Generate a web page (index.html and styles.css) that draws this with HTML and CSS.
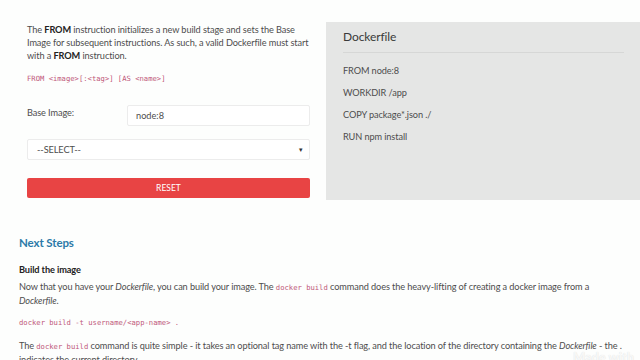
FILE: index.html
```html
<!doctype html>

<html>
  <head>
    <meta charset="UTF-8" />
    <title>Dockerfile</title>
    <link rel="stylesheet" href="styles.css">
  </head>

  <body>
    <div class="builder">
      <form class="form">
        <p class="intro">
          The <b>FROM</b> instruction initializes a new build stage and sets the Base
          Image for subsequent instructions. As such, a valid Dockerfile must start
          with a <b>FROM</b> instruction.
        </p>
        <code class="syntax">FROM &lt;image&gt;[:&lt;tag&gt;] [AS &lt;name&gt;]</code>

        <div class="field">
          <label for="base">Base Image:</label>
          <input type="text" id="base" value="node:8" />
        </div>

        <div class="select">
          <span>--SELECT--</span>
          <span class="arrow">&#9662;</span>
        </div>

        <button type="button" class="reset">RESET</button>
      </form>

      <div class="preview">
        <h3>Dockerfile</h3>
        <div class="line">FROM node:8</div>
        <div class="line">WORKDIR /app</div>
        <div class="line">COPY package*.json ./</div>
        <div class="line">RUN npm install</div>
      </div>
    </div>

    <div class="steps">
      <h2>Next Steps</h2>
      <h4>Build the image</h4>
      <p>
        Now that you have your <i>Dockerfile</i>, you can build your image. The
        <code>docker build</code> command does the heavy-lifting of creating a docker image from a
        <i>Dockerfile</i>.
      </p>
      <pre>docker build -t username/&lt;app-name&gt; .</pre>
      <p>
        The <code>docker build</code> command is quite simple - it takes an optional tag name with
        the -t flag, and the location of the directory containing the <i>Dockerfile</i> - the .
        indicates the current directory.
      </p>
    </div>

    <div class="watermark">Made with</div>
  </body>
</html>
```

FILE: styles.css
```css
* {
  box-sizing: border-box;
}

body {
  margin: 0;
  height: 360px;
  overflow: hidden;
  background: #fdfefd;
  color: #4d4d4d;
  font-family: Lato, sans-serif;
  font-size: 9.2px;
  letter-spacing: -0.1px;
  line-height: 13px;
}

b {
  color: #222;
}

code,
pre {
  font-family: "DejaVu Sans Mono", monospace;
  font-size: 7.2px;
  letter-spacing: 0;
  color: #c0587a;
}

.builder {
  display: flex;
  align-items: flex-start;
  padding: 22px 0 0 27px;
}

.form {
  width: 283px;
  flex: none;
}

.intro {
  margin: 1px 0 0;
}

.syntax {
  display: block;
  margin-top: 10px;
}

.field {
  display: flex;
  align-items: center;
  margin-top: 20px;
}

.field label {
  width: 100px;
  margin-top: -6px;
}

.field input {
  flex: 1;
  height: 21px;
  padding: 0 8px;
  border: 1px solid #ececec;
  border-radius: 2px;
  font: inherit;
  color: #4d4d4d;
  background: #fff;
}

.select {
  display: flex;
  justify-content: space-between;
  align-items: center;
  height: 21px;
  margin-top: 13px;
  padding: 0 6px 0 9px;
  border: 1px solid #ececec;
  border-radius: 2px;
  background: #fff;
}

.arrow {
  font-size: 7px;
  color: #333;
}

.reset {
  display: block;
  width: 100%;
  height: 20px;
  margin-top: 18px;
  border: none;
  border-radius: 2px;
  background: #e84444;
  color: #fff;
  font: inherit;
  font-size: 8.5px;
}

.preview {
  flex: 1;
  height: 178px;
  margin-left: 16px;
  padding: 7px 16px 0 17px;
  background: #e5e6e5;
}

.preview h3 {
  margin: 0 0 7px;
  padding-bottom: 7px;
  border-bottom: 1px solid #d6d7d6;
  font-size: 12px;
  font-weight: normal;
  line-height: 16px;
  color: #3a3a3a;
}

.line {
  line-height: 22px;
}

.steps {
  padding: 0 14px 0 19px;
  margin-top: 35px;
}

.steps h2 {
  margin: 0;
  font-size: 11.5px;
  line-height: 16px;
  font-weight: bold;
  color: #2c7aa8;
}

.steps h4 {
  margin: 12px 0 0;
  font-size: 9.2px;
  font-weight: bold;
  color: #222;
}

.steps p {
  margin: 4px 0 0;
}

.steps pre {
  margin: 9px 0 0;
  line-height: 13px;
}

.steps pre + p {
  margin-top: 10px;
}

.watermark {
  position: absolute;
  right: 6px;
  bottom: -4px;
  font-size: 13px;
  font-weight: bold;
  color: rgba(255, 255, 255, 0.8);
  text-shadow: 0 0 1px rgba(0, 0, 0, 0.15);
}
```
